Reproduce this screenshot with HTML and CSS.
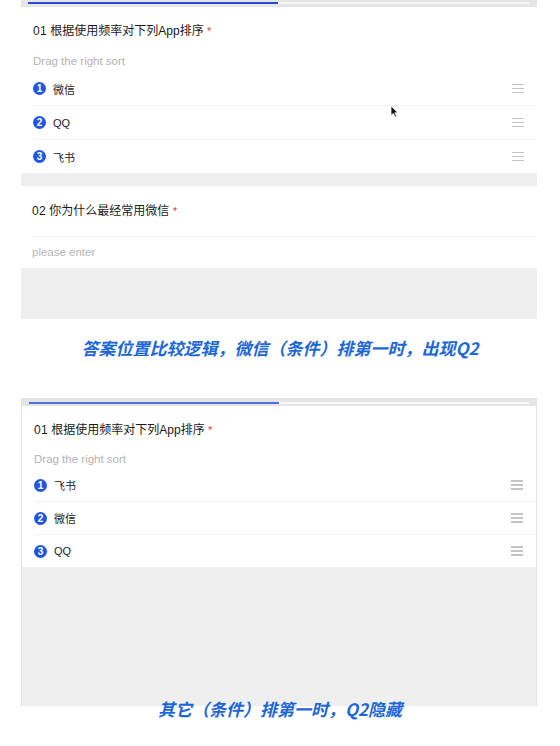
FILE: index.html
```html
<!DOCTYPE html>
<html lang="zh">
<head>
<meta charset="utf-8">
<link rel="stylesheet" href="styles.css">
</head>
<body>
<div class="page">
  <section class="shot shot-a">
    <div class="topbar"><div class="track"><div class="fill"></div></div></div>
    <div class="card">
      <div class="title"><span class="num">01</span> 根据使用频率对下列App排序 <span class="req">*</span></div>
      <div class="hint">Drag the right sort</div>
      <div class="rows">
        <div class="row"><span class="badge">1</span><span class="label">微信</span><span class="handle"><i></i><i></i><i></i></span></div>
        <div class="row"><span class="badge">2</span><span class="label">QQ</span><span class="handle"><i></i><i></i><i></i></span></div>
        <div class="row"><span class="badge">3</span><span class="label">飞书</span><span class="handle"><i></i><i></i><i></i></span></div>
      </div>
    </div>
    <div class="gap"></div>
    <div class="card card-q2">
      <div class="title title-q2"><span class="num">02</span> 你为什么最经常用微信 <span class="req">*</span></div>
      <div class="input">please enter</div>
    </div>
    <div class="fill-gray fill-a"></div>
    <svg class="cursor cursor-a" width="9" height="13" viewBox="0 0 9 13"><path d="M1 1 L1 10.5 L3.3 8.4 L5 12 L6.6 11.3 L4.9 7.8 L8 7.8 Z" fill="#111" stroke="#fff" stroke-width="0.8"/></svg>
  </section>

  <p class="caption caption-a">答案位置比较逻辑，微信（条件）排第一时，出现Q2</p>

  <section class="shot shot-b">
    <div class="topbar topbar-b"><div class="track"><div class="fill"></div></div></div>
    <div class="card card-b">
      <div class="title"><span class="num">01</span> 根据使用频率对下列App排序 <span class="req">*</span></div>
      <div class="hint">Drag the right sort</div>
      <div class="rows rows-b">
        <div class="row"><span class="badge">1</span><span class="label">飞书</span><span class="handle"><i></i><i></i><i></i></span></div>
        <div class="row"><span class="badge">2</span><span class="label">微信</span><span class="handle"><i></i><i></i><i></i></span></div>
        <div class="row"><span class="badge">3</span><span class="label">QQ</span><span class="handle"><i></i><i></i><i></i></span></div>
      </div>
    </div>
    <div class="fill-gray fill-b"></div>
    <svg class="cursor cursor-b" width="9" height="13" viewBox="0 0 9 13"><path d="M1 1 L1 10.5 L3.3 8.4 L5 12 L6.6 11.3 L4.9 7.8 L8 7.8 Z" fill="#111" stroke="#fff" stroke-width="0.8"/></svg>
  </section>

  <p class="caption caption-b">其它（条件）排第一时，Q2隐藏</p>
</div>
</body>
</html>
```
FILE: styles.css
```css
* { box-sizing: border-box; }
html, body { margin: 0; padding: 0; background: #fff; }
body {
  font-family: "Liberation Sans", "Noto Sans CJK SC", sans-serif;
  color: #1c1c1c;
}
.page {
  display: flex;
  flex-direction: column;
  height: 746px;
  overflow: hidden;
}

.shot {
  position: relative;
  margin-left: 21px;
  width: 516px;
  display: flex;
  flex-direction: column;
  flex: none;
}
.shot-b {
  border-left: 1px solid #e3e3e3;
  border-right: 1px solid #e3e3e3;
}

.topbar {
  height: 7px;
  background: #e5e5e5;
  padding: 2px 8px 0 7px;
}
.topbar-b { height: 8px; padding: 4px 7px 0 7px; }
.track {
  height: 2px;
  background: #f7f7f7;
  display: flex;
}
.fill { width: 250px; background: #2a4ad6; }
.topbar-b .fill { background: #4f6fdf; }

.card { background: #fff; padding-left: 12px; display: flex; flex-direction: column; }
.title {
  font-size: 12px;
  line-height: 16px;
  height: 32px;
  padding-top: 16px;
  color: #1a1a1a;
}
.num { letter-spacing: 0.3px; }
.req { color: #e0393e; font-size: 11px; }
.hint {
  margin-top: 15px;
  font-size: 11.5px;
  line-height: 14px;
  height: 14px;
  color: #b3b3b3;
}
.rows { margin-top: 4px; display: flex; flex-direction: column; }
.row {
  height: 34px;
  display: flex;
  align-items: center;
  border-top: 1px solid #f1f1f1;
  padding-right: 13px;
}
.row:first-child { border-top: none; height: 33px; }
.badge {
  width: 13px;
  height: 13px;
  border-radius: 50%;
  background: #1f56e6;
  color: #fff;
  font-size: 10px;
  font-weight: bold;
  line-height: 13px;
  text-align: center;
  flex: none;
}
.label { margin-left: 7px; font-size: 11px; color: #222; flex: 1; }
.handle {
  width: 12px;
  display: flex;
  flex-direction: column;
  gap: 2.5px;
}
.handle i { display: block; height: 1.5px; background: #c4c4c4; }

.gap { height: 13px; background: #efefef; }

.card-q2 { padding-left: 11px; }
.title-q2 { height: 51px; padding-top: 17px; padding-bottom: 17px; border-bottom: 1px solid #f1f1f1; }
.input {
  height: 31px;
  line-height: 31px;
  font-size: 11.5px;
  color: #b5b5b5;
}

.fill-gray { background: #efefef; }
.fill-a { height: 51px; }

.card-b { padding-left: 12px; }
.card-b .hint { margin-top: 14px; }
.rows-b { margin-top: 3px; }
.rows-b .row { height: 33px; }
.rows-b .row:first-child { height: 32px; }
.fill-b { height: 139px; }

.cursor { position: absolute; }
.cursor-a { left: 369px; top: 105px; }
.cursor-b { left: 364px; top: 494px; }

.caption {
  margin: 0;
  text-align: center;
  font-family: "Noto Sans CJK SC", sans-serif;
  font-weight: bold;
  font-style: italic;
  font-size: 17px;
  line-height: 24px;
  height: 24px;
  color: #1b66d8;
  flex: none;
}
.caption-a { margin-top: 17px; margin-bottom: 38px; }
.caption-b { margin-top: -8px; line-height: 22px; height: 22px; position: relative; }
```
